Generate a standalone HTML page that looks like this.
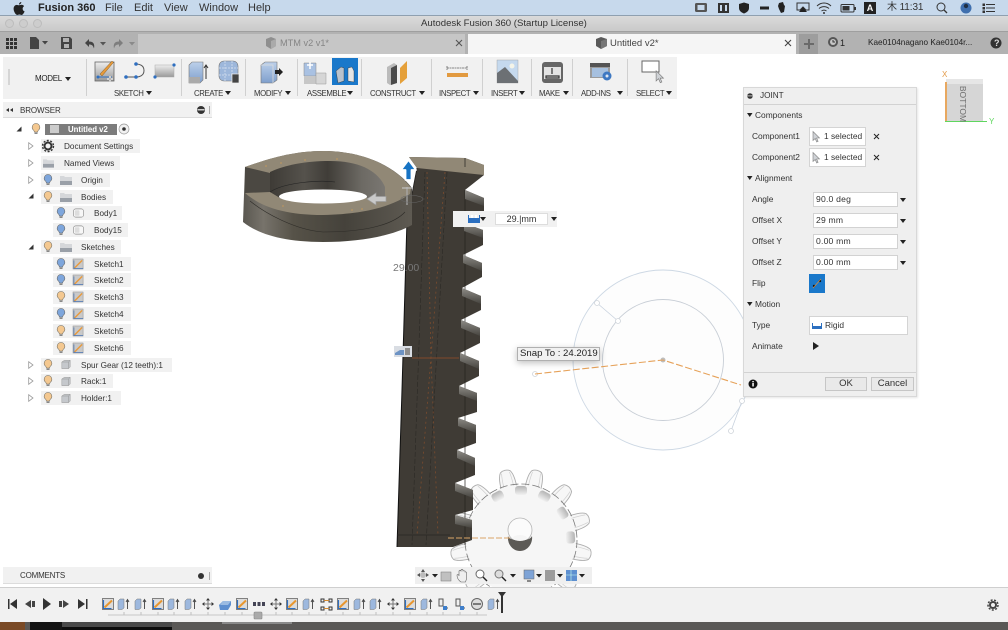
<!DOCTYPE html>
<html><head><meta charset="utf-8"><style>
*{box-sizing:border-box}
html,body{margin:0;padding:0}
body{width:1008px;height:630px;overflow:hidden;position:relative;background:#fff;font-family:"Liberation Sans","Noto Sans CJK JP",sans-serif;color:#333;font-size:9px}
#w{position:absolute;left:0;top:0;width:1008px;height:630px;overflow:hidden;filter:blur(.35px)}
.a{position:absolute;white-space:nowrap}
.c{position:absolute;background:#f1f1f1;height:14px}
.t{position:absolute;white-space:nowrap;line-height:12px;font-size:8.2px;margin-top:1px}
.m{position:absolute;top:1px;font-size:11px;line-height:14px;color:#333}
.l{position:absolute;top:88px;font-size:7.8px;line-height:11px;color:#333;white-space:nowrap;letter-spacing:-.35px}
.sep{position:absolute;top:59px;width:1px;height:37px;background:#d0d0d0}
.inp{position:absolute;background:#fff;border:1px solid #d2d2d2;height:15px;left:813px;width:85px;font-size:8.6px;line-height:13px;padding-left:2px;letter-spacing:.2px}
.tri{position:absolute;width:0;height:0;border-left:3px solid transparent;border-right:3px solid transparent;border-top:4px solid #222}
.lab{position:absolute;left:752px;font-size:8.4px;line-height:12px;color:#333;white-space:nowrap}
svg{position:absolute;overflow:visible}
</style></head><body><div id="w">

<svg width="0" height="0" style="left:0;top:0"><defs>
<symbol id="bb" viewBox="0 0 10 12" overflow="visible"><path d="M5 .5a3.800 3.800 0 0 0-2.300 6.800c.5.5.6 1 .6 1.700h3.400c0-.7.1-1.200.6-1.700A3.800 3.800 0 0 0 5 .5z" fill="#7ea6dc" stroke="#6a6a6a" stroke-width=".6"/><path d="M3.500 9.500h3v1.500h-3z" fill="#888"/></symbol>
<symbol id="bo" viewBox="0 0 10 12" overflow="visible"><path d="M5 .5a3.800 3.800 0 0 0-2.300 6.800c.5.5.6 1 .6 1.700h3.400c0-.7.1-1.200.6-1.700A3.800 3.800 0 0 0 5 .5z" fill="#f4c890" stroke="#7a7468" stroke-width=".6"/><path d="M3.500 9.500h3v1.500h-3z" fill="#888"/></symbol>
<symbol id="fo" viewBox="0 0 12 10" overflow="visible"><path d="M0 1h4l1 1h7v8H0z" fill="#d5d7da"/><path d="M0 6h12v4H0z" fill="#9aa0a8"/></symbol>
<symbol id="sk" viewBox="0 0 12 12" overflow="visible"><rect width="11" height="11" y=".5" fill="#c9c9c9" stroke="#888" stroke-width=".5"/><path d="M1 11 10 2" stroke="#e89a3c" stroke-width="1.600"/><path d="M1 2v9h10" stroke="#5a7fb5" fill="none" stroke-width=".9"/></symbol>
<symbol id="co" viewBox="0 0 12 12" overflow="visible"><path d="M1 3l3-2h7v8l-2 2H1z" fill="#c5c8cc" stroke="#8a8a8a" stroke-width=".5"/><path d="M1 3h8v8M9 3l2-2" stroke="#8a8a8a" fill="none" stroke-width=".5"/></symbol>
<symbol id="bd" viewBox="0 0 12 12" overflow="visible"><rect x=".5" y="1.500" width="11" height="9" rx="2.500" fill="#f7f7f7" stroke="#8d8d8d" stroke-width=".7"/><rect x="2" y="3" width="5" height="6" rx="1" fill="#ddd"/></symbol>
<symbol id="ao" viewBox="0 0 6 8" overflow="visible"><path d="M.7.7 5 4 .7 7.300z" fill="#fff" stroke="#9a9a9a" stroke-width=".8"/></symbol>
<symbol id="af" viewBox="0 0 6 6" overflow="visible"><path d="M5.500.5v5H.5z" fill="#333"/></symbol>
<symbol id="cu" viewBox="0 0 8 12" overflow="visible"><path d="M1 .5v9l2.200-2 1.500 3.500 1.400-.6-1.500-3.400H7.500z" fill="#cfd2d6" stroke="#7d7d7d" stroke-width=".6"/></symbol>
<symbol id="ts" viewBox="0 0 12 12" overflow="visible"><rect x=".5" y=".5" width="11" height="11" fill="#dcdcdc" stroke="#666" stroke-width=".8"/><path d="M2.500 9.500 10 2.500" stroke="#e8962e" stroke-width="2"/><path d="M1.500 2v8.500h8" stroke="#2f6fc0" fill="none" stroke-width="1.100"/></symbol>
<symbol id="te" viewBox="0 0 12 12" overflow="visible"><path d="M0 3l2-2h4v9l-2 1.500H0z" fill="#9db8de" stroke="#777" stroke-width=".5"/><path d="M9.500 11V2M8 4l1.500-2.500L11 4" stroke="#444" fill="none" stroke-width=".9"/></symbol>
<symbol id="tm" viewBox="0 0 12 12" overflow="visible"><path d="M6 0 8 2.500H4zM6 12 4 9.500h4zM0 6l2.500-2v4zM12 6 9.500 4v4z" fill="#333"/><path d="M6 2v8M2 6h8" stroke="#777" stroke-width="1"/></symbol>
<linearGradient id="wall" x1="0" x2="1" y1="0" y2="0"><stop offset="0" stop-color="#5a5750"/><stop offset=".12" stop-color="#77736b"/><stop offset=".3" stop-color="#565248"/><stop offset=".6" stop-color="#45423b"/><stop offset="1" stop-color="#5e5a52"/></linearGradient>
<linearGradient id="inw" x1="0" x2="1" y1="0" y2="0"><stop offset="0" stop-color="#3e3b36"/><stop offset=".3" stop-color="#55524c"/><stop offset=".5" stop-color="#403d38"/><stop offset=".8" stop-color="#6d6a64"/><stop offset="1" stop-color="#7a7772"/></linearGradient>
<linearGradient id="tf" x1="0" x2="0" y1="0" y2="1"><stop offset="0" stop-color="#8d8b86"/><stop offset="1" stop-color="#46443f"/></linearGradient>
<linearGradient id="gb" x1="0" x2="0" y1="0" y2="1"><stop offset="0" stop-color="#b4b4b4"/><stop offset="1" stop-color="#f2f2f2"/></linearGradient>
<g id="gt"><path d="M-8-50C-8-58-8-66-5-70-2-72 2-72 5-70 8-66 8-58 8-50z" fill="#f7f7f7" stroke="#adadad" stroke-width=".9"/><path d="M-4-69C-5-64-5-58-5-54M4-69C5-64 5-58 5-54" fill="none" stroke="#d0d0d0" stroke-width=".7"/></g>
<g id="gb1"><rect x="-6" y="-54" width="12" height="9" rx="3" fill="url(#gb)"/></g>
</defs></svg>

<svg width="1008" height="630" style="left:0;top:0">
<!-- right circles -->
<circle cx="663" cy="360" r="90" fill="#fdfdfd" stroke="#cdd8e4" stroke-width=".9"/>
<circle cx="663" cy="360" r="60.500" fill="#fdfdfd" stroke="#c8ced6" stroke-width=".9"/>
<path d="M597 303 618 321M742 401 731 431" stroke="#c8d2de" stroke-width=".8"/>
<g fill="#fff" stroke="#cfd4da" stroke-width=".8"><circle cx="597" cy="303" r="2.500"/><circle cx="618" cy="321" r="2.500"/><circle cx="742" cy="401" r="2.500"/><circle cx="731" cy="431" r="2.500"/><circle cx="535" cy="374" r="2.500"/></g>
<circle cx="663" cy="360" r="2.500" fill="#bdbdbd"/>
<path d="M535 374 663 360 741 385" fill="none" stroke="#e6a25a" stroke-width="1.100" stroke-dasharray="7 2.500"/>

<!-- gear -->
<g>
<use href="#gt" transform="translate(521 540) rotate(-13)"/>
<use href="#gt" transform="translate(521 540) rotate(13)"/>
<use href="#gt" transform="translate(521 540) rotate(42)"/>
<use href="#gt" transform="translate(521 540) rotate(72)"/>
<use href="#gt" transform="translate(521 540) rotate(102)"/>
<use href="#gt" transform="translate(521 540) rotate(132)"/>
<use href="#gt" transform="translate(521 540) rotate(165)"/>
<use href="#gt" transform="translate(521 540) rotate(195)"/>
<use href="#gt" transform="translate(521 540) rotate(228)"/>
<use href="#gt" transform="translate(521 540) rotate(258)"/>
<use href="#gt" transform="translate(521 540) rotate(288)"/>
<use href="#gt" transform="translate(521 540) rotate(318)"/>
<circle cx="521" cy="540" r="55" fill="#f6f6f6"/>
<use href="#gb1" transform="translate(521 540) rotate(0)"/>
<use href="#gb1" transform="translate(521 540) rotate(-28)"/>
<use href="#gb1" transform="translate(521 540) rotate(28)"/>
<use href="#gb1" transform="translate(521 540) rotate(57)"/>
<use href="#gb1" transform="translate(521 540) rotate(87)"/>
<circle cx="521" cy="540" r="56" fill="none" stroke="#7a7a7a" stroke-width=".8" stroke-dasharray="8 3"/>
<circle cx="520" cy="530" r="12" fill="#fbfbfb" stroke="#b5b5b5" stroke-width=".8"/>
<path d="M508 536c2 6 22 6 24 0 1 7-4 15-12 15s-13-8-12-15z" fill="#5c5a56"/>
<ellipse cx="520" cy="538" rx="7" ry="3" fill="#f5f5f5"/>
</g>

<!-- rack -->
<path d="M417 168 409 157 465 158 484 165V175L465 190 484 198V212L464 223 483 230V245L463 255 482 263V277L462 288 481 296V310L461 320 480 328V343L460 353 479 361V376L459 386 477 393V412L458 418 476 425V443L457 450 475 458V475L455 483 473 490V510L455 515 472 520 472 540 453 547 397 547 402 390 407 220z" fill="#3f3b35"/>
<path d="M409 157 465 158 484 165V175L417 168z" fill="#918876"/>
<path d="M465 158V167M465 190V545" stroke="#24221f" stroke-width=".7"/>
<path d="M407 220 417 168" stroke="#23211e" stroke-width=".8"/>
<path d="M402 390 397 547M407 220 402 390" stroke="#111" stroke-width="1"/>
<g fill="url(#tf)">
<path d="M465 190 484 198V206L465 199z"/>
<path d="M464 223 483 230V238L464 231z"/>
<path d="M463 255 482 263V271L463 263z"/>
<path d="M462 288 481 296V304L462 296z"/>
<path d="M461 320 480 328V336L461 328z"/>
<path d="M460 353 479 361V369L460 361z"/>
<path d="M459 386 477 393V401L459 394z"/>
<path d="M458 418 476 425V433L458 426z"/>
<path d="M457 450 475 458V466L457 458z"/>
<path d="M455 483 473 490V498L455 491z"/>
<path d="M455 515 472 520V528L455 524z"/>
</g>
<g fill="none" stroke="#2b2925" stroke-width=".6" stroke-dasharray="5 2"><path d="M425 172 412 545M447 172 426 545"/></g>
<g fill="none" stroke="#7c4c2e" stroke-width=".8" stroke-dasharray="2 3"><path d="M427 172 431 357 417 535M445 172 431 357 438 535"/></g>
<path d="M412 358H459" stroke="#80492a" stroke-width=".9"/>
<path d="M397 535H450" stroke="#292724" stroke-width=".7"/>
<path d="M448 538H512" stroke="#d9a468" stroke-width="1" stroke-dasharray="6 2"/>

<!-- ring -->
<path d="M245 167C270 158 295 151 323 151c40 0 72 15 89 37v37c-18 10-50 17-89 17-40 0-65-8-80-20z" fill="url(#wall)"/>
<path d="M245 167C270 158 295 151 323 151c40 0 72 15 88 37l-1 6c-12 8-35 20-87 21-38 0-62-8-78-22z" fill="#918876"/>
<path d="M270 172C285 165 305 161 330 161c30 0 48 10 55 26v10l-17 1H280l-10-6z" fill="url(#inw)"/>
<ellipse cx="323" cy="196.500" rx="44" ry="7" fill="#fff"/>
<path d="M245 167 270 173V192L245 193z" fill="#4b4842"/>
<path d="M250 201C265 213 295 230 323 232c35 0 68-5 82-20" fill="none" stroke="#2e2c28" stroke-width=".6"/>
<path d="M270 192c15-10 50-12 65-10" fill="none" stroke="#222" stroke-width=".6"/>
<g fill="#e0a24f"><circle cx="266" cy="166" r=".6"/><circle cx="281" cy="163" r=".6"/><circle cx="305" cy="160" r=".6"/><circle cx="337" cy="159" r=".6"/><circle cx="283" cy="206" r=".6"/><circle cx="352" cy="210" r=".6"/><circle cx="362" cy="209" r=".6"/></g>

<!-- gizmos -->
<path d="M405.500 180V170H401L408.500 160 416 170H411.500V180z" fill="#1673c4" stroke="#fff" stroke-width="1.800" stroke-linejoin="round"/>
<path d="M386 196.500H376V193L367 199 376 205V201.500H386z" fill="#c9c9c9" stroke="#9c9c9c" stroke-width=".7"/>
<path d="M407 187V205" stroke="#aaa" stroke-width="1.200"/><path d="M402 188h11" stroke="#c0c0c0" stroke-width="1.200"/>
<ellipse cx="412" cy="199" rx="11" ry="3.500" fill="none" stroke="#666" stroke-width=".6"/>
<rect x="394" y="346" width="18" height="11" fill="#d9dde3"/><path d="M395 355h9v-5h-4l-5 3z" fill="#6d93c4"/><rect x="405" y="348" width="5" height="7" fill="#8e8e8e"/>
</svg>

<div class="a" style="left:393px;top:261px;font-size:10.500px;line-height:14px;color:#777">29.00</div>

<!-- in-canvas input -->
<div class="a" style="left:453px;top:211px;width:104px;height:16px;background:#f1f1f1"></div>
<svg width="12" height="8" style="left:468px;top:215px"><path d="M0 0h1v5h10V0h1v8H0z" fill="#2b6fc0"/><path d="M1 3h10v2H1z" fill="#2b6fc0"/><path d="M3 0h2v3H3zM7 0h2v3H7z" fill="#fff"/></svg>
<div class="tri" style="left:480px;top:217px"></div>
<div class="a" style="left:495px;top:213px;width:53px;height:12px;background:#fff;border:1px solid #ddd;text-align:center;font-size:9px;line-height:10px;color:#333">29.|mm</div>
<div class="tri" style="left:551px;top:217px"></div>

<!-- snap -->
<div class="a" style="left:517px;top:347px;width:83px;height:14px;background:#f1f1f1;border:1px solid #b0b0b0;box-shadow:0 2px 7px rgba(0,0,0,.25);font-size:9.600px;line-height:12px;padding-left:2px;color:#222">Snap To : 24.2019</div>

<!-- menu bar -->
<div class="a" style="left:0;top:0;width:1008px;height:16px;background:#c7d9ec;border-bottom:1px solid #8fa0b0"></div>
<svg width="12" height="13" style="left:13px;top:2px" viewBox="0 0 12 13"><path d="M8.300 0c.1 1.300-1 2.500-2.300 2.500C5.900 1.300 7 .1 8.300 0zM6 3.300c.7 0 1.400-.5 2.500-.5 1 0 2 .5 2.600 1.400-2.200 1.300-1.800 4.300.5 5.200-.6 1.500-1.800 3.600-3 3.600-.8 0-1.200-.5-2.200-.5s-1.500.5-2.200.5C2.700 13 .6 9.500.6 6.800.6 4.300 2.200 2.900 3.700 2.900c.9 0 1.700.4 2.300.4z" fill="#222"/></svg>
<div class="m" style="left:38px;font-weight:bold;color:#222">Fusion 360</div>
<div class="m" style="left:105px">File</div><div class="m" style="left:134px">Edit</div><div class="m" style="left:164px">View</div><div class="m" style="left:199px">Window</div><div class="m" style="left:248px">Help</div>
<svg width="310" height="16" style="left:695px;top:0">
<rect x="0" y="3" width="12" height="9" rx="1.500" fill="#555"/><rect x="2.500" y="5" width="7" height="5" fill="#c7d9ec"/>
<rect x="23" y="3" width="11" height="10" fill="#333"/><rect x="25" y="5" width="2" height="6" fill="#c7d9ec"/><rect x="30" y="5" width="2" height="6" fill="#c7d9ec"/>
<path d="M49 2.500 54 4v4c0 3-2.500 4.500-5 5.500C46.500 12.500 44 11 44 8V4z" fill="#222"/>
<rect x="65" y="6.500" width="9" height="3" fill="#222"/>
<path d="M84 3l4-1 1 3 1 1-1 6-3 1-2-4-1-3z" fill="#222"/>
<path d="M102 3h12v7h-3l-3-3-3 3h-3z" fill="none" stroke="#333" stroke-width="1"/><path d="M104 12h8l-4-5z" fill="#222"/>
<path d="M122 6c4-4 10-4 14 0M124 8.500c3-2.500 7-2.500 10 0M126.500 11c1.500-1 3.500-1 5 0" fill="none" stroke="#333" stroke-width="1"/><circle cx="129" cy="13" r="1" fill="#333"/>
<rect x="146" y="4.500" width="13" height="7.500" rx="1" fill="none" stroke="#333"/><rect x="147.500" y="6" width="7" height="4.500" fill="#333"/><rect x="159.500" y="7" width="1.500" height="3" fill="#333"/>
<rect x="169" y="2" width="12" height="12" fill="#222"/>
<path d="M249 10l3 3" stroke="#333" stroke-width="1.300"/><circle cx="246" cy="7" r="4" fill="none" stroke="#333" stroke-width="1"/>
<circle cx="271" cy="8" r="5.500" fill="#3f6fae"/><circle cx="271" cy="6" r="2.200" fill="#1f2f44"/>
<path d="M288 4h1.500v1.500H288zM288 7.500h1.500V9H288zM288 11h1.500v1.500H288zM291 4.500h9M291 8h9M291 11.500h9" stroke="#333" stroke-width="1" fill="#333"/>
</svg>
<div class="a" style="left:866px;top:2px;font-size:9px;line-height:12px;font-weight:bold;color:#fff;width:8px;text-align:center">A</div>
<div class="a" style="left:887px;top:1px;font-size:10px;line-height:14px;color:#333;letter-spacing:-.1px">木 11:31</div>

<!-- title bar -->
<div class="a" style="left:0;top:16px;width:1008px;height:16px;background:linear-gradient(#dadada,#c9c9c9);border-bottom:1px solid #9f9f9f"></div>
<div class="a" style="left:5px;top:19px;width:9px;height:9px;border-radius:50%;background:#cdcdcd;border:1px solid #bcbcbc"></div>
<div class="a" style="left:19px;top:19px;width:9px;height:9px;border-radius:50%;background:#cdcdcd;border:1px solid #bcbcbc"></div>
<div class="a" style="left:33px;top:19px;width:9px;height:9px;border-radius:50%;background:#cdcdcd;border:1px solid #bcbcbc"></div>
<div class="a" style="left:421px;top:18px;font-size:9.600px;line-height:12px;color:#333">Autodesk Fusion 360 (Startup License)</div>

<!-- tab row -->
<div class="a" style="left:0;top:32px;width:1008px;height:22px;background:#b2b2b2"></div>
<div class="a" style="left:138px;top:34px;width:327px;height:20px;background:#c6c6c6"></div>
<div class="a" style="left:468px;top:34px;width:328px;height:20px;background:#f5f5f5"></div>
<div class="a" style="left:799px;top:34px;width:19px;height:20px;background:#9d9d9d"></div>
<svg width="1008" height="22" style="left:0;top:32px">
<g fill="#333"><rect x="6" y="6" width="3" height="3"/><rect x="10" y="6" width="3" height="3"/><rect x="14" y="6" width="3" height="3"/><rect x="6" y="10" width="3" height="3"/><rect x="10" y="10" width="3" height="3"/><rect x="14" y="10" width="3" height="3"/><rect x="6" y="14" width="3" height="3"/><rect x="10" y="14" width="3" height="3"/><rect x="14" y="14" width="3" height="3"/></g>
<path d="M30 5h6l3 3v9h-9z" fill="#444"/><path d="M42 9h6l-3 3.500z" fill="#444"/>
<path d="M61 5h9l2 2v10H61z" fill="#444"/><rect x="63" y="6" width="6" height="4" fill="#b2b2b2"/><rect x="64" y="12" width="5" height="4" fill="#b2b2b2"/>
<path d="M85 11l4-4v2.500c4 0 6 2 5 7-1-3-2-4-5-4V15z" fill="#444"/><path d="M100 10h6l-3 3.500z" fill="#555"/>
<path d="M123 11l-4-4v2.500c-4 0-6 2-5 7 1-3 2-4 5-4V15z" fill="#7e7e7e"/><path d="M129 10h6l-3 3.500z" fill="#8a8a8a"/>
<path d="M266 7l5-2 5 2v7l-5 3-5-3z" fill="#8f8f8f"/><path d="M271 9v8l5-3V7z" fill="#aaa"/>
<path d="M456 8l6 6M462 8l-6 6" stroke="#555" stroke-width="1.100"/>
<path d="M596 7l5-2 6 2v7l-6 3-5-3z" fill="#5a5a5a"/><path d="M601 9v8l6-3V7z" fill="#777"/>
<path d="M785 8l6 6M791 8l-6 6" stroke="#444" stroke-width="1.100"/>
<path d="M809 7v10M804 12h10" stroke="#6a6a6a" stroke-width="2"/>
<circle cx="833" cy="10" r="5" fill="#555"/><circle cx="833" cy="10" r="3" fill="#c7c7c7"/><path d="M833 8v2h2" stroke="#333" fill="none"/>
<circle cx="996" cy="11" r="5.500" fill="#333"/>
</svg>
<div class="a" style="left:610px;top:37px;font-size:9.500px;line-height:13px;color:#444">Untitled v2*</div>
<div class="a" style="left:280px;top:37px;font-size:9.200px;line-height:13px;color:#858585">MTM v2 v1*</div>
<div class="a" style="left:840px;top:37px;font-size:9px;line-height:12px;color:#222">1</div>
<div class="a" style="left:868px;top:37px;font-size:8.200px;line-height:12px;color:#222">Kae0104nagano Kae0104r...</div>
<div class="a" style="left:994px;top:37px;font-size:9px;line-height:12px;font-weight:bold;color:#ddd">?</div>

<!-- toolbar -->
<div class="a" style="left:3px;top:57px;width:674px;height:42px;background:#f1f1f1"></div>
<div class="a" style="left:8px;top:69px;width:2px;height:16px;background:#d5d5d5"></div>
<div class="sep" style="left:86px"></div><div class="sep" style="left:181px"></div><div class="sep" style="left:245px"></div><div class="sep" style="left:297px"></div><div class="sep" style="left:361px"></div><div class="sep" style="left:431px"></div><div class="sep" style="left:482px"></div><div class="sep" style="left:531px"></div><div class="sep" style="left:572px"></div><div class="sep" style="left:627px"></div>
<div class="a" style="left:35px;top:73px;font-size:8px;line-height:12px;color:#222;letter-spacing:-.3px">MODEL</div><div class="tri" style="left:65px;top:77px"></div>
<div class="l" style="left:114px">SKETCH</div><div class="tri" style="left:146px;top:91px"></div>
<div class="l" style="left:194px">CREATE</div><div class="tri" style="left:225px;top:91px"></div>
<div class="l" style="left:254px">MODIFY</div><div class="tri" style="left:285px;top:91px"></div>
<div class="l" style="left:307px">ASSEMBLE</div><div class="tri" style="left:347px;top:91px"></div>
<div class="l" style="left:370px">CONSTRUCT</div><div class="tri" style="left:419px;top:91px"></div>
<div class="l" style="left:439px">INSPECT</div><div class="tri" style="left:473px;top:91px"></div>
<div class="l" style="left:491px">INSERT</div><div class="tri" style="left:519px;top:91px"></div>
<div class="l" style="left:539px">MAKE</div><div class="tri" style="left:563px;top:91px"></div>
<div class="l" style="left:581px">ADD-INS</div><div class="tri" style="left:617px;top:91px"></div>
<div class="l" style="left:636px">SELECT</div><div class="tri" style="left:666px;top:91px"></div>

<svg width="1008" height="40" style="left:0;top:57px">
<defs><linearGradient id="g1" x1="0" y1="0" x2="0" y2="1"><stop offset="0" stop-color="#eee"/><stop offset="1" stop-color="#999"/></linearGradient><linearGradient id="g2" x1="0" y1="0" x2="0" y2="1"><stop offset="0" stop-color="#bcd0ea"/><stop offset="1" stop-color="#7f9fcc"/></linearGradient></defs>
<rect x="95" y="5" width="19" height="19" fill="url(#g1)" stroke="#666" stroke-width=".8"/>
<path d="M100 17 112 4l1.500 1.500L102 19z" fill="#e69a3a" stroke="#6a4a20" stroke-width=".4"/>
<path d="M98 20h14" stroke="#2f6fc0" stroke-width="1"/><circle cx="98" cy="20" r="1.500" fill="#2f6fc0"/><path d="M110 19v6M107 22h6" stroke="#fff" stroke-width="2"/><path d="M110 19v6M107 22h6" stroke="#888" stroke-width=".8"/>
<path d="M126 20h10M136 20c3 0 8-1 8-6.500S139 7 136 7" fill="none" stroke="#555" stroke-width="1"/>
<g fill="#2f6fc0"><circle cx="126" cy="20" r="1.800"/><circle cx="136" cy="20" r="1.800"/><circle cx="136" cy="7" r="1.800"/></g>
<rect x="155" y="8" width="19" height="12" fill="url(#g1)" stroke="#aaa" stroke-width=".5"/><g fill="#2f6fc0"><circle cx="155" cy="20" r="1.600"/><circle cx="174" cy="8" r="1.600"/></g>
<path d="M189 8l3-3h11v18l-3 3h-11z" fill="url(#g2)" stroke="#777" stroke-width=".6"/><rect x="189" y="20" width="11" height="6" fill="#aaa"/><path d="M206 22V8M204 11l2-3 2 3" stroke="#333" fill="none"/>
<rect x="219" y="4" width="19" height="20" rx="5" fill="#9db7db" stroke="#777" stroke-width=".6"/><path d="M219 11h19M219 18h19M225 4v20M232 4v20" stroke="#c9d7eb" stroke-dasharray="2 1"/><rect x="232" y="17" width="7" height="9" fill="#444" stroke="#eee" stroke-width=".7"/>
<path d="M261 8l4-3h12v18l-4 3h-12z" fill="url(#g2)" stroke="#777" stroke-width=".6"/><path d="M261 8h12v18" fill="none" stroke="#ddd" stroke-width=".8"/><path d="M275 13h4v-2l4 4-4 4v-2h-4z" fill="#222"/>
<path d="M304 6h12v13h-12z" fill="#a9c1e2" stroke="#888" stroke-width=".5"/><path d="M304 19h12v8h-12z" fill="#c7c7c7"/><path d="M316 16h10v11h-10z" fill="#d6d6d6" stroke="#999" stroke-width=".5"/><path d="M310 5v7M307 8h6" stroke="#fff" stroke-width="1.500"/>
<rect x="332" y="1" width="26" height="27" fill="#1a78ca"/><path d="M336 14l5-4 3 1v13l-6 2z" fill="#b9c2cd" stroke="#333" stroke-width=".4"/><path d="M354 14l-2-4-4 1v13l6 1z" fill="#e5e5e5" stroke="#333" stroke-width=".4"/>
<path d="M387 10l7-4 3 2v18l-7 2-3-2z" fill="#bbb"/><path d="M391 11l6-3v18l-6 2z" fill="#4b4b4b"/><path d="M400 11l7-7v17l-7 6z" fill="#e5a03a"/>
<path d="M447 9v4M447 11h20M467 9v4" stroke="#666" stroke-width=".8" stroke-dasharray="2 .5"/><rect x="447" y="16" width="21" height="4" fill="#e29a40"/>
<rect x="497" y="3" width="21" height="23" fill="#c5d9ee" stroke="#999" stroke-width=".4"/><path d="M497 26V16l8-6 13 14v2z" fill="#6c7074"/><circle cx="512" cy="9" r="2.500" fill="#f4f4e8"/>
<rect x="542" y="5" width="21" height="21" rx="3" fill="#666"/><rect x="544" y="10" width="17" height="12" fill="#e3e3e3"/><path d="M546 21h13v-2h-13zM552 11v6" stroke="#333" stroke-width="1.200" fill="none"/>
<rect x="590" y="6" width="20" height="15" fill="#9b9b9b"/><rect x="590" y="6" width="20" height="4" fill="#555"/><rect x="592" y="11" width="16" height="9" fill="#a6c0df"/><circle cx="607" cy="19" r="4.500" fill="#3e78c2"/><circle cx="607" cy="19" r="1.500" fill="#dfe7f2"/>
<rect x="642" y="4" width="17" height="11" fill="#fff" stroke="#666" stroke-width="1"/><use href="#cu" x="655" y="13" width="9" height="14"/>
</svg>

<!-- browser -->
<div class="a" style="left:3px;top:102px;width:209px;height:16px;background:#f1f1f1;border-bottom:1px solid #dcdcdc"></div>
<div class="a" style="left:20px;top:105px;font-size:8px;line-height:12px;color:#333;letter-spacing:-.1px">BROWSER</div>
<svg width="220" height="20" style="left:0;top:102px"><path d="M9 6v4L6 8zM13 6v4L10 8z" fill="#333"/><circle cx="201" cy="8" r="4" fill="#333"/><rect x="197.500" y="7" width="7" height="1.500" fill="#ccc"/><rect x="209" y="4" width="1" height="8" fill="#aaa"/></svg>

<div class="c" style="left:45px;top:124px;width:72px;height:11px;background:#7c7c7c"></div>
<div class="c" style="left:41px;top:139px;width:99px"></div>
<div class="c" style="left:41px;top:156px;width:79px"></div>
<div class="c" style="left:41px;top:173px;width:69px"></div>
<div class="c" style="left:41px;top:190px;width:72px"></div>
<div class="c" style="left:53px;top:206px;width:69px"></div>
<div class="c" style="left:53px;top:223px;width:75px"></div>
<div class="c" style="left:41px;top:240px;width:80px"></div>
<div class="c" style="left:53px;top:257px;width:78px"></div>
<div class="c" style="left:53px;top:273px;width:78px"></div>
<div class="c" style="left:53px;top:290px;width:78px"></div>
<div class="c" style="left:53px;top:307px;width:78px"></div>
<div class="c" style="left:53px;top:324px;width:78px"></div>
<div class="c" style="left:53px;top:341px;width:78px"></div>
<div class="c" style="left:41px;top:358px;width:131px"></div>
<div class="c" style="left:41px;top:374px;width:72px"></div>
<div class="c" style="left:41px;top:391px;width:80px"></div>

<svg width="220" height="420" style="left:0;top:0">
<use href="#af" x="16" y="126" width="6" height="6"/>
<use href="#bo" x="31" y="123" width="10" height="12"/>
<rect x="50" y="125" width="9" height="8" fill="#ccc"/>
<circle cx="124" cy="129" r="5" fill="#f1f1f1" stroke="#999" stroke-width=".7"/><circle cx="124" cy="129" r="1.800" fill="#333"/>
<use href="#ao" x="28" y="142" width="6" height="8"/>
<circle cx="48" cy="146" r="3.500" fill="none" stroke="#333" stroke-width="2"/><circle cx="48" cy="146" r="5.500" fill="none" stroke="#333" stroke-width="1.400" stroke-dasharray="2 1.500"/>
<use href="#ao" x="28" y="159" width="6" height="8"/>
<use href="#fo" x="43" y="158" width="11" height="10"/>
<use href="#ao" x="28" y="176" width="6" height="8"/>
<use href="#bb" x="43" y="174" width="10" height="12"/><use href="#fo" x="60" y="175" width="12" height="10"/>
<use href="#af" x="28" y="193" width="6" height="6"/>
<use href="#bo" x="43" y="191" width="10" height="12"/><use href="#fo" x="60" y="192" width="12" height="10"/>
<use href="#bb" x="56" y="207" width="10" height="12"/><use href="#bd" x="73" y="207" width="11" height="12"/>
<use href="#bb" x="56" y="224" width="10" height="12"/><use href="#bd" x="73" y="224" width="11" height="12"/>
<use href="#af" x="28" y="244" width="6" height="6"/>
<use href="#bo" x="43" y="241" width="10" height="12"/><use href="#fo" x="60" y="242" width="12" height="10"/>
<use href="#bb" x="56" y="258" width="10" height="12"/><use href="#sk" x="73" y="258" width="11" height="12"/>
<use href="#bb" x="56" y="274" width="10" height="12"/><use href="#sk" x="73" y="274" width="11" height="12"/>
<use href="#bo" x="56" y="291" width="10" height="12"/><use href="#sk" x="73" y="291" width="11" height="12"/>
<use href="#bb" x="56" y="308" width="10" height="12"/><use href="#sk" x="73" y="308" width="11" height="12"/>
<use href="#bo" x="56" y="325" width="10" height="12"/><use href="#sk" x="73" y="325" width="11" height="12"/>
<use href="#bo" x="56" y="342" width="10" height="12"/><use href="#sk" x="73" y="342" width="11" height="12"/>
<use href="#ao" x="28" y="361" width="6" height="8"/>
<use href="#bo" x="43" y="359" width="10" height="12"/><use href="#co" x="61" y="359" width="10" height="11"/>
<use href="#ao" x="28" y="377" width="6" height="8"/>
<use href="#bo" x="43" y="375" width="10" height="12"/><use href="#co" x="61" y="376" width="10" height="11"/>
<use href="#ao" x="28" y="394" width="6" height="8"/>
<use href="#bo" x="43" y="392" width="10" height="12"/><use href="#co" x="61" y="393" width="10" height="11"/>
</svg>
<div class="t" style="left:68px;top:123px;color:#fff;font-weight:bold;font-size:7.800px">Untitled v2</div>
<div class="t" style="left:64px;top:140px">Document Settings</div>
<div class="t" style="left:64px;top:157px">Named Views</div>
<div class="t" style="left:81px;top:174px">Origin</div>
<div class="t" style="left:81px;top:191px">Bodies</div>
<div class="t" style="left:94px;top:207px">Body1</div>
<div class="t" style="left:94px;top:224px">Body15</div>
<div class="t" style="left:81px;top:241px">Sketches</div>
<div class="t" style="left:94px;top:258px">Sketch1</div>
<div class="t" style="left:94px;top:274px">Sketch2</div>
<div class="t" style="left:94px;top:291px">Sketch3</div>
<div class="t" style="left:94px;top:308px">Sketch4</div>
<div class="t" style="left:94px;top:325px">Sketch5</div>
<div class="t" style="left:94px;top:342px">Sketch6</div>
<div class="t" style="left:81px;top:359px">Spur Gear (12 teeth):1</div>
<div class="t" style="left:81px;top:375px">Rack:1</div>
<div class="t" style="left:81px;top:392px">Holder:1</div>

<!-- view cube -->
<div class="a" style="left:946px;top:79px;width:37px;height:42px;background:#d6d6d6;box-shadow:inset 0 5px 0 #e6e6e6"></div>
<div class="a" style="left:945px;top:82px;width:2px;height:39px;background:#e8a860"></div>
<div class="a" style="left:945px;top:121px;width:42px;height:1px;background:#5fd65f"></div>
<div class="a" style="left:942px;top:70px;font-size:8px;line-height:10px;color:#e39a48">X</div>
<div class="a" style="left:989px;top:117px;font-size:8px;line-height:10px;color:#5fd65f">Y</div>
<div class="a" style="left:941px;top:99px;width:44px;font-size:8.500px;line-height:10px;color:#6e6e6e;transform:rotate(90deg);text-align:center">BOTTOM</div>

<!-- joint panel -->
<div class="a" style="left:743px;top:87px;width:174px;height:310px;background:#efefef;border:1px solid #d8d8d8;box-shadow:1px 1px 2px rgba(0,0,0,.1)"></div>
<div class="a" style="left:744px;top:104px;width:172px;height:1px;background:#d2d2d2"></div>
<div class="a" style="left:744px;top:372px;width:172px;height:1px;background:#d2d2d2"></div>
<div class="a" style="left:760px;top:90px;font-size:8.200px;line-height:12px;color:#333">JOINT</div>
<svg width="1008" height="400" style="left:0;top:0">
<circle cx="750" cy="96" r="2.800" fill="#333"/><rect x="747" y="95.500" width="6" height=".8" fill="#ddd"/>
<path d="M747 113h5.500l-2.750 4zM747 176h5.500l-2.750 4zM747 302h5.500l-2.750 4z" fill="#222"/>
<path d="M874 134l5 5M879 134l-5 5M874 155l5 5M879 155l-5 5" stroke="#222" stroke-width="1"/>
<path d="M900 198h6l-3 4zM900 219h6l-3 4zM900 240h6l-3 4zM900 261h6l-3 4zM899 324h6l-3 4z" fill="#222"/>
<rect x="809" y="274" width="16" height="19" fill="#1a78ca"/>
<circle cx="814" cy="286" r="1.200" fill="#111"/><circle cx="820" cy="281" r="1.200" fill="#111"/><path d="M813 288l8-9" stroke="#d58b3c" stroke-width=".8"/>
<path d="M813 342v8l6-4z" fill="#222"/>
<circle cx="753" cy="384" r="4.500" fill="#111"/><rect x="752.300" y="383" width="1.500" height="3.500" fill="#fff"/><rect x="752.300" y="381" width="1.500" height="1.300" fill="#fff"/>
</svg>
<div class="a" style="left:755px;top:109px;font-size:8.400px;line-height:12px">Components</div>
<div class="a" style="left:755px;top:172px;font-size:8.400px;line-height:12px">Alignment</div>
<div class="a" style="left:755px;top:298px;font-size:8.400px;line-height:12px">Motion</div>
<div class="lab" style="top:130px">Component1</div>
<div class="lab" style="top:151px">Component2</div>
<div class="lab" style="top:193px">Angle</div>
<div class="lab" style="top:214px">Offset X</div>
<div class="lab" style="top:235px">Offset Y</div>
<div class="lab" style="top:256px">Offset Z</div>
<div class="lab" style="top:277px">Flip</div>
<div class="lab" style="top:319px">Type</div>
<div class="lab" style="top:340px">Animate</div>
<div class="a" style="left:809px;top:127px;width:57px;height:19px;background:#fff;border:1px solid #d4d4d4;font-size:8.400px;line-height:17px;padding-left:14px">1 selected</div>
<div class="a" style="left:809px;top:148px;width:57px;height:19px;background:#fff;border:1px solid #d4d4d4;font-size:8.400px;line-height:17px;padding-left:14px">1 selected</div>
<svg width="8" height="12" style="left:812px;top:131px"><use href="#cu" width="8" height="12"/></svg>
<svg width="8" height="12" style="left:812px;top:152px"><use href="#cu" width="8" height="12"/></svg>
<div class="inp" style="top:192px">90.0 deg</div>
<div class="inp" style="top:213px">29 mm</div>
<div class="inp" style="top:234px">0.00 mm</div>
<div class="inp" style="top:255px">0.00 mm</div>
<div class="a" style="left:809px;top:316px;width:99px;height:19px;background:#fff;border:1px solid #d4d4d4;font-size:8.400px;line-height:17px;padding-left:15px">Rigid</div>
<svg width="10" height="6" style="left:812px;top:323px"><path d="M0 0h1v4h8V0h1v6H0z" fill="#2b6fc0"/><path d="M1 3h8v2H1z" fill="#2b6fc0"/></svg>
<div class="a" style="left:825px;top:377px;width:42px;height:14px;background:#e9e9e9;border:1px solid #c6c6c6;font-size:9.500px;line-height:12px;text-align:center">OK</div>
<div class="a" style="left:871px;top:377px;width:43px;height:14px;background:#e9e9e9;border:1px solid #c6c6c6;font-size:9.500px;line-height:12px;text-align:center">Cancel</div>

<!-- comments -->
<div class="a" style="left:3px;top:567px;width:209px;height:17px;background:#f1f1f1;border-bottom:1px solid #dcdcdc"></div>
<div class="a" style="left:20px;top:570px;font-size:8px;line-height:12px;letter-spacing:-.2px">COMMENTS</div>
<svg width="220" height="20" style="left:0;top:567px"><circle cx="201" cy="9" r="3" fill="#333"/><rect x="209" y="5" width="1" height="8" fill="#aaa"/></svg>

<!-- nav bar -->
<div class="a" style="left:415px;top:567px;width:177px;height:17px;background:#efefef"></div>
<svg width="180" height="18" style="left:415px;top:567px">
<path d="M8 2 10 5H6zM8 15 6 12h4zM2 8l3-2v4zM14 8l-3-2v4z" fill="#555"/><circle cx="8" cy="8" r="3" fill="#bbb"/>
<path d="M17 7h6l-3 3.500z" fill="#222"/><rect x="26" y="5" width="10" height="9" fill="#c0c0c0" stroke="#777" stroke-width=".5"/>
<path d="M46 15c-3-2-4-5-4-7 1-1 2 0 2 1V4c1-1 2 0 2 0V3c1-1 2 0 2 0v1c1-.5 2 0 2 0v1c1-.3 1.500.3 1.500.5V12l-1 3z" fill="#eee" stroke="#666" stroke-width=".6"/>
<circle cx="65" cy="7" r="4" fill="#fff" stroke="#666"/><path d="M68 10l4 4" stroke="#222" stroke-width="1.400"/>
<circle cx="84" cy="7" r="4" fill="#ddd" stroke="#777"/><path d="M87 10l4 4" stroke="#222" stroke-width="1.400"/>
<path d="M95 7h6l-3 3.500z" fill="#222"/>
<rect x="109" y="3" width="10" height="9" fill="#7ea3d6" stroke="#666" stroke-width=".5"/><path d="M112 14h4" stroke="#666" stroke-width="1.500"/>
<path d="M121 7h6l-3 3.500z" fill="#222"/>
<rect x="130" y="3" width="10" height="11" fill="#9c9c9c"/>
<path d="M142 7h6l-3 3.500z" fill="#222"/>
<rect x="151" y="3" width="11" height="11" fill="#5d8fd0"/><path d="M151 8h11M156 3v11" stroke="#cfe" stroke-width=".6"/>
<path d="M164 7h6l-3 3.500z" fill="#222"/>
</svg>

<!-- timeline -->
<div class="a" style="left:0;top:587px;width:1008px;height:35px;background:#f1f1f1;border-top:1px solid #cfcfcf"></div>
<div class="a" style="left:0;top:622px;width:1008px;height:8px;background:#5a5856"></div>
<div class="a" style="left:0;top:622px;width:25px;height:8px;background:#7a4a26"></div>
<div class="a" style="left:30px;top:622px;width:32px;height:8px;background:#141414"></div>
<div class="a" style="left:62px;top:622px;width:110px;height:5px;background:#4a4a4a"></div>
<div class="a" style="left:62px;top:627px;width:110px;height:3px;background:#0e0e0e"></div>
<div class="a" style="left:222px;top:622px;width:70px;height:2px;background:#8a8a8a"></div>
<svg width="1008" height="35" style="left:0;top:587px">
<g fill="#333">
<path d="M8 12h1.500v10H8zM17 12v10l-7-5z"/>
<path d="M31 13v8l-6-4zM32 14h3v6h-3z" fill="#444"/>
<path d="M43 11l8 6-8 6z"/>
<path d="M62 14h-3v6h3zM63 13v8l6-4z" fill="#444"/>
<path d="M78 12v10l7-5zM86 12h1.500v10H86z"/>
</g>
<path d="M108 28h379" stroke="#c6c6c6"/>
<g stroke="#c0c0c0"><path d="M124 25v3M141 25v3M158 25v3M174 25v3M191 25v3M208 25v3M225 25v3M242 25v3M276 25v3M292 25v3M309 25v3M326 25v3M343 25v3M360 25v3M376 25v3M393 25v3M410 25v3M427 25v3M443 25v3M460 25v3M477 25v3"/></g>
<rect x="254" y="25" width="8" height="7" rx="1" fill="#aaa" stroke="#888" stroke-width=".6"/>
<use href="#ts" x="102" y="11" width="12" height="12"/>
<use href="#te" x="118" y="11" width="12" height="12"/>
<use href="#te" x="135" y="11" width="12" height="12"/>
<use href="#ts" x="152" y="11" width="12" height="12"/>
<use href="#te" x="168" y="11" width="12" height="12"/>
<use href="#te" x="185" y="11" width="12" height="12"/>
<use href="#tm" x="202" y="11" width="12" height="12"/>
<path d="M219 18l4-4h8v4l-3 5h-8z" fill="#5e8fcf"/><path d="M223 14h8l-3 4h-8z" fill="#9bbbe2"/>
<use href="#ts" x="236" y="11" width="12" height="12"/>
<g fill="#445"><rect x="253" y="15" width="3" height="4"/><rect x="257.500" y="15" width="3" height="4"/><rect x="262" y="15" width="3" height="4"/></g>
<use href="#tm" x="270" y="11" width="12" height="12"/>
<use href="#ts" x="286" y="11" width="12" height="12"/>
<use href="#te" x="303" y="11" width="12" height="12"/>
<g fill="none" stroke="#333"><rect x="321" y="12" width="3" height="3"/><rect x="329" y="12" width="3" height="3"/><rect x="321" y="20" width="3" height="3"/><rect x="329" y="20" width="3" height="3"/></g><path d="M324 13.500h5M324 21.500h5" stroke="#d48a30"/>
<use href="#ts" x="337" y="11" width="12" height="12"/>
<use href="#te" x="354" y="11" width="12" height="12"/>
<use href="#te" x="370" y="11" width="12" height="12"/>
<use href="#tm" x="387" y="11" width="12" height="12"/>
<use href="#ts" x="404" y="11" width="12" height="12"/>
<use href="#te" x="421" y="11" width="12" height="12"/>
<path d="M439 12h4v7h-4zM445 21h3" fill="none" stroke="#555"/><rect x="443" y="19" width="4" height="4" fill="#3f7fcb"/>
<path d="M456 12h4v7h-4zM462 21h3" fill="none" stroke="#555"/><rect x="460" y="19" width="4" height="4" fill="#3f7fcb"/>
<circle cx="477" cy="17" r="5.500" fill="#ddd" stroke="#666"/><path d="M473 17h8" stroke="#444" stroke-width="1.300"/>
<use href="#te" x="488" y="11" width="12" height="12"/>
<path d="M498 5h8l-3 4v17h-2V9z" fill="#333"/>
<circle cx="993" cy="18" r="3" fill="none" stroke="#444" stroke-width="2"/><circle cx="993" cy="18" r="5" fill="none" stroke="#444" stroke-width="1.500" stroke-dasharray="2 1.500"/>
</svg>
</div></body></html>
